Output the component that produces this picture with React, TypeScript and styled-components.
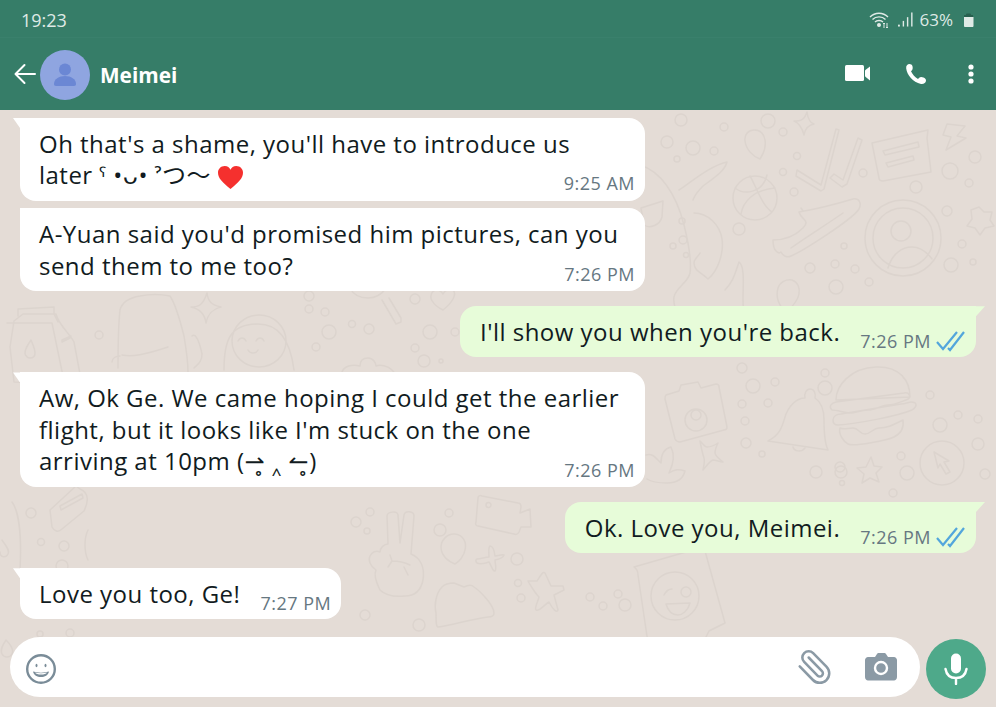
import React from 'react';
import styled, { createGlobalStyle } from 'styled-components';
import { Paperclip } from 'lucide-react';

const GlobalStyle = createGlobalStyle`
  html, body { margin: 0; padding: 0; }
  body { font-family: "Open Sans", "Noto Sans", "DejaVu Sans", "Noto Sans CJK JP", sans-serif; }
`;

const Page = styled.div`
  position: relative;
  width: 996px;
  height: 707px;
  overflow: hidden;
  background: #e4dcd6;
  display: flex;
  flex-direction: column;
`;

const Wallpaper = styled.svg`
  position: absolute;
  inset: 0;
  width: 996px;
  height: 707px;
  fill: none;
  stroke: #dcd4ce;
  stroke-width: 1.5;
  stroke-linejoin: round;
  stroke-linecap: round;
`;

const StatusBar = styled.div`
  position: relative;
  height: 38px;
  flex: none;
  box-sizing: border-box;
  padding: 2px 22px 0 21px;
  display: flex;
  align-items: center;
  justify-content: space-between;
  background: #367d68;
  border-bottom: 1px solid #3a806c;
  color: #dfeae6;
  font-size: 18px;
`;

const StatusIcons = styled.div`
  display: flex;
  align-items: center;
  gap: 7px;
  font-size: 17px;
`;

const BatteryIcon = styled.svg`
  margin-left: 3px;
`;

const AppBar = styled.header`
  position: relative;
  height: 72px;
  flex: none;
  box-sizing: border-box;
  padding: 0 21px 0 14px;
  display: flex;
  align-items: center;
  background: #367d68;
  color: #fff;
`;

const Avatar = styled.div`
  width: 50px;
  height: 50px;
  margin: 2px 0 0 4px;
  border-radius: 50%;
  background: #8fa5e0;
  display: flex;
  align-items: center;
  justify-content: center;
`;

const Name = styled.div`
  margin: 2px 0 0 10px;
  font-size: 20.800px;
  font-weight: 700;
  flex: 1;
`;

const Actions = styled.div`
  display: flex;
  align-items: center;
  gap: 34px;
  margin-top: -1px;
`;

const MoreIcon = styled.svg`
  margin-left: 6px;
`;

const Chat = styled.main`
  position: relative;
  flex: 1;
  display: flex;
  flex-direction: column;
  padding: 8px 20px 0;
`;

const Bubble = styled.div<{ $out?: boolean; $tight?: boolean; $tail?: boolean; $inline?: boolean }>`
  position: relative;
  align-self: ${(p) => (p.$out ? 'flex-end' : 'flex-start')};
  margin-top: ${(p) => (p.$tight ? '7.400px' : '15px')};
  &:first-child { margin-top: 0; }
  box-sizing: border-box;
  max-width: 625px;
  width: ${(p) => (p.$inline ? 'auto' : '625px')};
  padding: 9.500px 10px 10px ${(p) => (p.$out ? '20px' : '19px')};
  background: ${(p) => (p.$out ? '#e7fcd9' : '#fff')};
  border-radius: ${(p) => (p.$out ? '16px 0 16px 16px' : '0 16px 16px 16px')};
  display: grid;
  grid-template-columns: ${(p) => (p.$inline ? '1fr auto' : '1fr')};
  column-gap: 20px;
  &::before {
    content: '';
    position: absolute;
    top: 0;
    ${(p) => (p.$out ? 'right: -9px;' : 'left: -7px;')}
    width: ${(p) => (p.$out ? '9px' : '7px')};
    height: 10px;
    background: ${(p) => (p.$out ? '#e7fcd9' : '#fff')};
    clip-path: ${(p) =>
      p.$out ? 'polygon(0 0, 100% 0, 0 100%)' : 'polygon(0 0, 100% 0, 100% 100%)'};
    display: ${(p) => (p.$tail ? 'block' : 'none')};
  }
`;

const Text = styled.div`
  grid-area: 1 / 1;
  font-size: 24px;
  letter-spacing: 0.48px;
  line-height: 31.700px;
  color: #111b21;
  white-space: nowrap;
`;

const Meta = styled.div<{ $inline?: boolean }>`
  grid-area: ${(p) => (p.$inline ? '1 / 2' : '1 / 1')};
  justify-self: end;
  align-self: end;
  display: flex;
  align-items: center;
  gap: 5px;
  font-size: 18px;
  letter-spacing: 0.500px;
  line-height: 22px;
  color: #667781;
  margin-bottom: ${(p) => (p.$inline ? '-5px' : '-3.500px')};
`;

const Heart = styled.svg`
  width: 27px;
  height: 25px;
  margin: 0 0 -6px 6px;
  vertical-align: baseline;
  display: inline-block;
`;

const Composer = styled.div`
  position: absolute;
  left: 10px;
  right: 10px;
  bottom: 8px;
  display: flex;
  align-items: flex-start;
  gap: 6px;
`;

const InputPill = styled.div`
  flex: 1;
  height: 60px;
  box-sizing: border-box;
  padding: 0 23px 0 15px;
  background: #fff;
  border-radius: 30px;
  display: flex;
  align-items: center;
  justify-content: space-between;
`;

const EmojiIcon = styled.svg`
  margin-top: 4px;
`;

const PillRight = styled.div`
  display: flex;
  align-items: center;
  gap: 31px;
`;

const ClipIcon = styled(Paperclip)`
  transform: scaleX(-1);
  display: block;
`;

const MicButton = styled.div`
  width: 60px;
  height: 60px;
  margin-top: 2px;
  border-radius: 50%;
  background: #4ea98a;
  display: flex;
  align-items: center;
  justify-content: center;
`;

// loose dots scattered over the wallpaper: x, y, r
const DOTS: [number, number, number][] = [
  [681, 120, 6], [667, 142, 6], [693, 148, 7], [724, 127, 4], [714, 151, 4], [677, 159, 3],
  [768, 121, 7], [783, 132, 4], [797, 156, 3.5], [783, 172, 3.5], [794, 192, 4], [863, 173, 4],
  [916, 187, 6], [950, 171, 8], [975, 157, 6], [969, 183, 4], [947, 211, 5], [962, 244, 4],
  [951, 265, 7], [973, 262, 3], [739, 229, 6], [682, 221, 3], [683, 240, 4], [673, 246, 3],
  [686, 255, 2.5], [810, 268, 5], [835, 264, 4], [855, 269, 4], [869, 282, 4], [836, 287, 7],
  [844, 246, 3],
  [742, 368, 5], [753, 386, 7], [775, 382, 4], [742, 404, 4], [768, 403, 4], [745, 421, 4],
  [746, 443, 5], [762, 454, 3], [825, 388, 7], [825, 373, 4], [930, 395, 4], [940, 425, 7],
  [958, 415, 4], [978, 419, 4], [978, 444, 6], [901, 456, 4], [907, 473, 7], [841, 472, 6],
  [816, 472, 6], [840, 467, 5], [842, 483, 2.5], [985, 474, 5], [893, 493, 4],
  [99, 335, 4], [309, 296, 5], [309, 309, 4], [325, 312, 4], [352, 324, 3.5], [329, 332, 7],
  [369, 329, 5], [316, 347, 4], [415, 299, 5], [455, 332, 4], [430, 332, 7], [415, 348, 4],
  [424, 361, 6], [441, 361, 2],
  [370, 512, 4], [356, 522, 5], [367, 531, 3], [440, 530, 6], [449, 513, 4], [518, 583, 3.5],
  [517, 559, 6], [521, 598, 4], [365, 615, 5], [419, 625, 6], [618, 594, 4], [590, 597, 4],
  [603, 606, 4], [625, 605, 6],
  [31, 513, 5], [41, 542, 3.5], [64, 546, 5], [62, 566, 6], [40, 634, 3], [70, 633, 4],
];

// each wallpaper doodle is one path drawn in page coordinates
const DOODLES: string[] = [
  // pin, sparkle
  'M760 159c-8-3-14-10-15-18-1-7 4-11 9-11 6 0 10 4 11 10 1 6-1 13-5 19z',
  'M794 121c6 0 10 0 13-9 1 7 3 11 7 12-5 1-9 4-10 11-2-8-5-12-10-14z',
  // double check
  'M797 170l24 15 15-56 3 1-15 59-3 2-25-15zM830 178l12 9 5-3 15-44-4-2-15 42-9-6z',
  // note card + lightning
  'M872 143l56-13-1 8 4 34-48 9c-3 0-4-1-4-3zM883 151l35-9 1 5-34 8zM886 163l27-7 1 4-26 7z',
  'M947 124l18 2-8 10 9 2-20 12 5-13-8-2z',
  // basketball
  'M733 198a22 22 0 1 0 44 0a22 22 0 1 0-44 0zM735 188c10 8 28 4 32-13M741 214c2-12 12-24 34-26M750 176c6 10 12 30 22 36',
  // shoe
  'M773 240c8 0 20-2 30-12 8-8-2-8-4-16 12-2 34-7 54-13 6-1 9 4 6 10-6 10-56 42-68 47-4 2-8 0-10-4-2 2-8 0-8-12zM843 213c-20 14-34 22-52 35M803 211l-2-3',
  // ring avatar
  'M865 238a38 38 0 1 0 76 0a38 38 0 1 0-76 0zM873 238a30 30 0 1 0 60 0a30 30 0 1 0-60 0zM891 231a10 10 0 1 0 20 0a10 10 0 1 0-20 0zM888 268c4-14 14-21 24-21 8 0 14 4 20 12',
  // star top right
  'M979 207l5 5 8 0-2 8 4 6-9 2-5 7-5-7-8-2 5-7-1-9z',
  // octopus arm + glasses
  'M640 165c20 6 36 28 44 60 4 16 8 34 6 48-2 10-14 14-16 24-2 10 6 20 8 30M679 190c10-6 30-24 48-28-2 8-10 14-24 24-4 4-8 8-10 14M694 213c14 0 26 12 28 26 2 14-4 32-14 40-6-6-14-8-14-16 0-4 4-6 6-10M725 290c8-8 10-16 14-28 6 4 4 24 4 36 0 8 0 14 4 22',
  'M641 208l22-7-1 16c-2 8-12 12-18 8z',
  // pin low
  'M787 312c-7-4-12-14-9-24 2-6 8-9 14-8 6 2 8 8 7 14-1 6-6 12-12 18z',
  // camera
  'M666 395l13-4 2-6 17-3 3 6 15-4c2 0 3 1 3 3l8 40c0 2-1 3-3 3l-44 12c-3 0-4-1-5-3l-10-40c0-2 0-3 1-4zM685 420a11 11 0 1 0 22 0a11 11 0 1 0-22 0zM691 415a5 5 0 1 0 10 0a5 5 0 1 0-10 0z',
  // bell
  'M768 441c12-6 14-14 17-24 3-10 11-19 20-19-1-4 1-9 5-9 4 0 6 4 5 9 6 4 9 12 9 22 0 10 0 22 4 30zM793 447c1 4 8 6 12 1',
  // burger
  'M836 400c0-14 14-32 40-33 24-1 34 14 34 30zM832 410c-4-4 0-7 4-8l68-9c6-1 8 5 2 7-8 3-12 5-18 5-6 0-12 5-20 5-8 0-12 3-18 3-6 0-12-3-18-3zM833 420c0-4 4-6 8-6l60-10c4 0 8-2 10-2 6 0 7 4 1 8-14 6-56 14-74 15-3 0-5-2-5-5zM840 428c-2 6 4 14 8 16 6 3 40-4 46-7 8-4 10-10 9-17-12 6-16 8-24 8-6 0-8 6-14 6-6 0-6-6-12-6-6 0-8 2-13 0z',
  // cursor ring
  'M920 463a22 22 0 1 0 44 0a22 22 0 1 0-44 0zM934 452l4 16 2-4 6 10 4-2-6-10 5-1z',
  // stars and leaves
  'M700 441c4 4 5 6 7 6 3 0 8-2 11-4-2 4-3 7-3 10 0 2 3 5 8 9-5-1-8-2-10-2-3 1-5 4-10 10 1-5 2-9 1-12-1-3-2-6-4-17z',
  'M871 457l3 9 8 1-6 6 3 9-9-4-8 5 2-9-7-6 9-1z',
  'M646 455c8-2 10 4 15 8 0-8 2-14 10-16 4 8 2 18-2 26 6-4 10-4 16-2-2 8-8 12-18 12-6 0-14 0-20-4',
  // milk carton
  'M14 321l9-7h33c2 10 14 20 18 28l6 32-20 10-46-2-4-35zM18 316v-7l36-2v7M7 323h45l12 58M54 314l4 8M62 340l9-4-1 2-8 4zM31 340c-3 5-6 8-6 13 0 3 3 5 5 5 3 0 5-2 5-5 0-4-2-8-4-13z',
  // backpack
  'M118 368c0-20 0-40 2-58 2-8 8-12 20-14 10-2 20-2 30 0 4 6 10 24 14 40 2 12 4 26 4 36M122 355c10 2 22 0 46-8M192 336c4-4 8 8 10 18 0 8-4 10-8 14M112 362c0-4 4-6 8-6',
  // sparkle + hood smiley
  'M191 307c8 0 12-2 16-14 1 8 4 12 14 14-8 2-13 6-15 16-1-8-6-14-15-16z',
  'M224 370c0-30 6-46 34-46 20 0 32 14 36 46M232 341a27 26 0 1 0 54 0a27 26 0 1 0-54 0zM238 341c2-4 6-4 8 0M256 341c2-4 6-4 8 0M248 350c2 4 8 4 10 0',
  // magnifier + heart + flower
  'M350 288c4 8 10 10 18 10 8 0 14-4 18-10M382 300l14 24 5-2 0-4-12-20',
  'M433 302c-4-4-2-12 4-12 2 0 4 1 6 4 2-4 6-6 10-4 4 4 0 12-10 20-4-2-8-4-10-8z',
  'M342 372c2-6 10-8 18-6 0-6 4-8 8-8 6 0 8 6 8 8 4-2 12 0 16 4 4 4 6 8 7 12',
  // peace hand, video, person, cross
  'M380 590c-4-8-6-16-4-20-6-4-8-10-6-14 2-4 6-6 10-4 0-4 4-8 8-8l-1-28c0-4 10-6 11-1l2 28 4-28c1-5 10-4 10 1l-3 38c10 4 14 14 12 26-2 10-8 16-18 16-10 1-20-1-25-6zM390 555l2 6-4 6M392 561c8 0 14 2 18 4M404 567l4 8',
  'M478 498c0-2 2-3 4-2l36 7c2 0 3 2 3 4l-1 6 10-4 1 18-10 0-2 5c-1 2-3 3-5 2l-36-8c-2 0-3-2-2-4zM486 505a2.5 2.5 0 1 0 5 0a2.5 2.5 0 1 0-5 0z',
  'M441 547c0-6 6-14 14-13 8 1 12 8 10 16-1 6-6 12-10 14-6-2-14-8-14-17zM436 613c-2-8 0-20 6-26 4-4 8-4 12-4l10 4c4-2 8-2 10 0 6 4 20 18 20 26 0 2-2 4-6 4-16 2-36 8-50 10-2 0-2-6-2-14z',
  'M477 559c4 0 8-2 12-2 0-4-1-10 1-11 2 0 4 2 5 10 4 0 6-2 9-1-1 3-4 4-9 5 0 4 2 8 0 11-2 1-4-6-6-9-4 1-8 3-12 1-2-2-1-4 0-4z',
  'M528 581l9 0c4-6 6-10 8-8l6 13 12 0 1 4-10 5 4 15c-1 3-5 0-9-8-4 2-10 10-13 8-2-2 2-8 3-13-4-4-10-14-11-16z',
  // wink card
  'M634 567l66-19c2 0 4 1 5 3l20 72-16 8-5 10-42-1-14 3-10-68c0-3-1-6-4-8zM651 596a24 24 0 1 0 48 0a24 24 0 1 0-48 0zM681 592a5 5 0 1 0 10 0a5 5 0 1 0-10 0zM664 595c2-4 4-6 8-6M666 604l24-1c-2 8-8 12-12 12-6 0-10-4-12-11z',
  // lower left bits
  'M50 510l26-24 4 3c10 4 8 14 4 22l-22 18c-4 4-8 2-10-2zM60 506l22-12 1 4-22 12zM2 540c4 6 8 10 6 14-2 4-8 4-8-2M12 502c6 8 10 30 8 68M88 530c-4 8-4 22 0 30',
  'M6 640c-4 6-6 10-4 14 2 4 8 4 10 0 2-4-2-10-6-14z',
];

const Meimei = () => (
  <svg width="30" height="30" viewBox="0 0 30 30" fill="#6b87d4">
    <circle cx="15" cy="9.500" r="6" />
    <path d="M4 24c0-5 5-8 11-8s11 3 11 8c0 1-.6 2-2 2H6c-1.400 0-2-1-2-2z" />
  </svg>
);

const DoubleCheck = () => (
  <svg width="30" height="22" viewBox="0 0 30 22" fill="none" stroke="#53a6dc" strokeWidth="2.200">
    <path d="M1 12l6 7L21 2M12 18l2 2L28 2" />
  </svg>
);

export default function App() {
  return (
    <Page>
      <GlobalStyle />
      <Wallpaper viewBox="0 0 996 707">
        {DOTS.map(([x, y, r], i) => (
          <circle key={i} cx={x} cy={y} r={r} />
        ))}
        {DOODLES.map((d, i) => (
          <path key={i} d={d} />
        ))}
      </Wallpaper>

      <StatusBar>
        <span>19:23</span>
        <StatusIcons>
          <svg width="22" height="18" viewBox="0 0 22 18" fill="none" stroke="#dfeae6" strokeWidth="1.400">
            <path d="M1 6c5-5 13-5 18 0M3.500 8.500c3.500-3.500 9.500-3.500 13 0M6 11c2-2 6-2 8 0" />
            <circle cx="10" cy="14" r="1.300" fill="#dfeae6" />
            <path d="M15 17v-5M18 17v-5M14 13l1-1 1 1M17 16l1 1 1-1" strokeWidth="1" />
          </svg>
          <svg width="15" height="17" viewBox="0 0 16 17" fill="#dfeae6">
            <rect x="0" y="14" width="2" height="2" />
            <rect x="5" y="10" width="1.500" height="6" />
            <rect x="9.500" y="6" width="1.500" height="10" />
            <rect x="14" y="1" width="1.500" height="15" />
          </svg>
          <span>63%</span>
          <BatteryIcon width="11" height="14" viewBox="0 0 11 14">
            <path d="M3 2c0-1 .5-1.500 1-1.500h3c.5 0 1 .5 1 1.500h2v2H1V2z" fill="#27604f" />
            <path d="M1 4h9.500v9c0 .5-.5 1-1 1H2c-.5 0-1-.5-1-1z" fill="#dfeae6" />
          </BatteryIcon>
        </StatusIcons>
      </StatusBar>

      <AppBar>
        <svg width="22" height="22" viewBox="0 0 22 22" fill="none" stroke="#fff" strokeWidth="2" strokeLinecap="round" strokeLinejoin="round">
          <path d="M21 11H2M10.500 2L1.500 11l9 9" />
        </svg>
        <Avatar>
          <Meimei />
        </Avatar>
        <Name>Meimei</Name>
        <Actions>
          <svg width="26" height="17" viewBox="0 0 26 17" fill="#fff">
            <rect x="0" y="0" width="19" height="16" rx="1.500" />
            <path d="M20 6c0-.5.3-1 .7-1.300L25 1.500v14L20.700 12c-.4-.3-.7-.8-.7-1.300z" />
          </svg>
          <svg width="22" height="22" viewBox="0 0 22 22" fill="#fff">
            <path d="M4.500 1C2.500 1 .8 2.700 1.200 5.500c.9 6.500 6.500 13.500 14.800 15.500 2.500.4 5-1 5-3.500 0-1.500-1-2.500-2.500-3-1.500-.6-3.200-.8-4.300.2l-1.200 1.200C10 14.500 7.500 11.500 6 8.300L7 7.200C8 6 7.800 4 7.300 2.800 7 1.700 5.800 1 4.500 1z" />
          </svg>
          <MoreIcon width="8" height="20" viewBox="0 0 8 20" fill="#fff">
            <circle cx="4" cy="3" r="2.600" />
            <circle cx="4" cy="10" r="2.600" />
            <circle cx="4" cy="17" r="2.600" />
          </MoreIcon>
        </Actions>
      </AppBar>

      <Chat>
        <Bubble $tail>
          <Text>
            Oh that's a shame, you'll have to introduce us
            <br />
            later ˤ •ᴗ• ˀつ〜
            <Heart viewBox="0 0 28 26">
              <path d="M14 25C6 18 1 14 1 8c0-4 3-7 7-7 3 0 5 1.500 6 4 1-2.500 3-4 6-4 4 0 7 3 7 7 0 6-5 10-13 17z" fill="#f5302e" />
            </Heart>
          </Text>
          <Meta>9:25 AM</Meta>
        </Bubble>
        <Bubble $tight>
          <Text>
            A-Yuan said you'd promised him pictures, can you
            <br />
            send them to me too?
          </Text>
          <Meta>7:26 PM</Meta>
        </Bubble>
        <Bubble $out $tail $inline>
          <Text>I'll show you when you're back.</Text>
          <Meta $inline>
            7:26 PM
            <DoubleCheck />
          </Meta>
        </Bubble>
        <Bubble $tail>
          <Text>
            Aw, Ok Ge. We came hoping I could get the earlier
            <br />
            flight, but it looks like I'm stuck on the one
            <br />
            arriving at 10pm (⇀̥ ‸ ↼̥)
          </Text>
          <Meta>7:26 PM</Meta>
        </Bubble>
        <Bubble $out $tail $inline>
          <Text>Ok. Love you, Meimei.</Text>
          <Meta $inline>
            7:26 PM
            <DoubleCheck />
          </Meta>
        </Bubble>
        <Bubble $tail $inline>
          <Text>Love you too, Ge!</Text>
          <Meta $inline>7:27 PM</Meta>
        </Bubble>
      </Chat>

      <Composer>
        <InputPill>
          <EmojiIcon width="32" height="32" viewBox="0 0 32 32" fill="none" stroke="#7a8c98" strokeWidth="2.400">
            <circle cx="16" cy="16" r="13.800" />
            <ellipse cx="11.500" cy="12.500" rx="1" ry="1.800" fill="#7a8c98" stroke="none" />
            <ellipse cx="20.500" cy="12.500" rx="1" ry="1.800" fill="#7a8c98" stroke="none" />
            <path d="M8 18.500c5 1.500 11 1.500 16 0-1 4-4 5.500-8 5.500s-7-1.500-8-5.500z" fill="#7a8c98" stroke="none" />
            <path d="M10 19.500c4 1 8 1 12 0-1 1.500-3 2-6 2s-5-.5-6-2z" fill="#fff" stroke="none" />
          </EmojiIcon>
          <PillRight>
            <ClipIcon size={38} color="#8b9aa5" strokeWidth={1.6} />
            <svg width="32" height="30" viewBox="0 0 32 30">
              <path d="M3 5h7l2-3c.4-.6 1-1 2-1h5c1 0 1.600.4 2 1l2 3h6c1.500 0 3 1.500 3 3v17c0 2-1.500 3.500-3 3.500H3C1.500 28.500 0 27 0 25V8c0-1.500 1.500-3 3-3z" fill="#8b9aa5" />
              <circle cx="16" cy="16" r="6" fill="none" stroke="#fff" strokeWidth="2.400" />
            </svg>
          </PillRight>
        </InputPill>
        <MicButton>
          <svg width="24" height="32" viewBox="0 0 24 32" fill="none" stroke="#fff" strokeWidth="2.400" strokeLinecap="round">
            <rect x="7" y="0.500" width="10" height="20" rx="5" fill="#fff" stroke="none" />
            <path d="M1.500 16c1 6 5 9 10.500 9s9.500-3 10.500-9M12 25v6" />
          </svg>
        </MicButton>
      </Composer>
    </Page>
  );
}
